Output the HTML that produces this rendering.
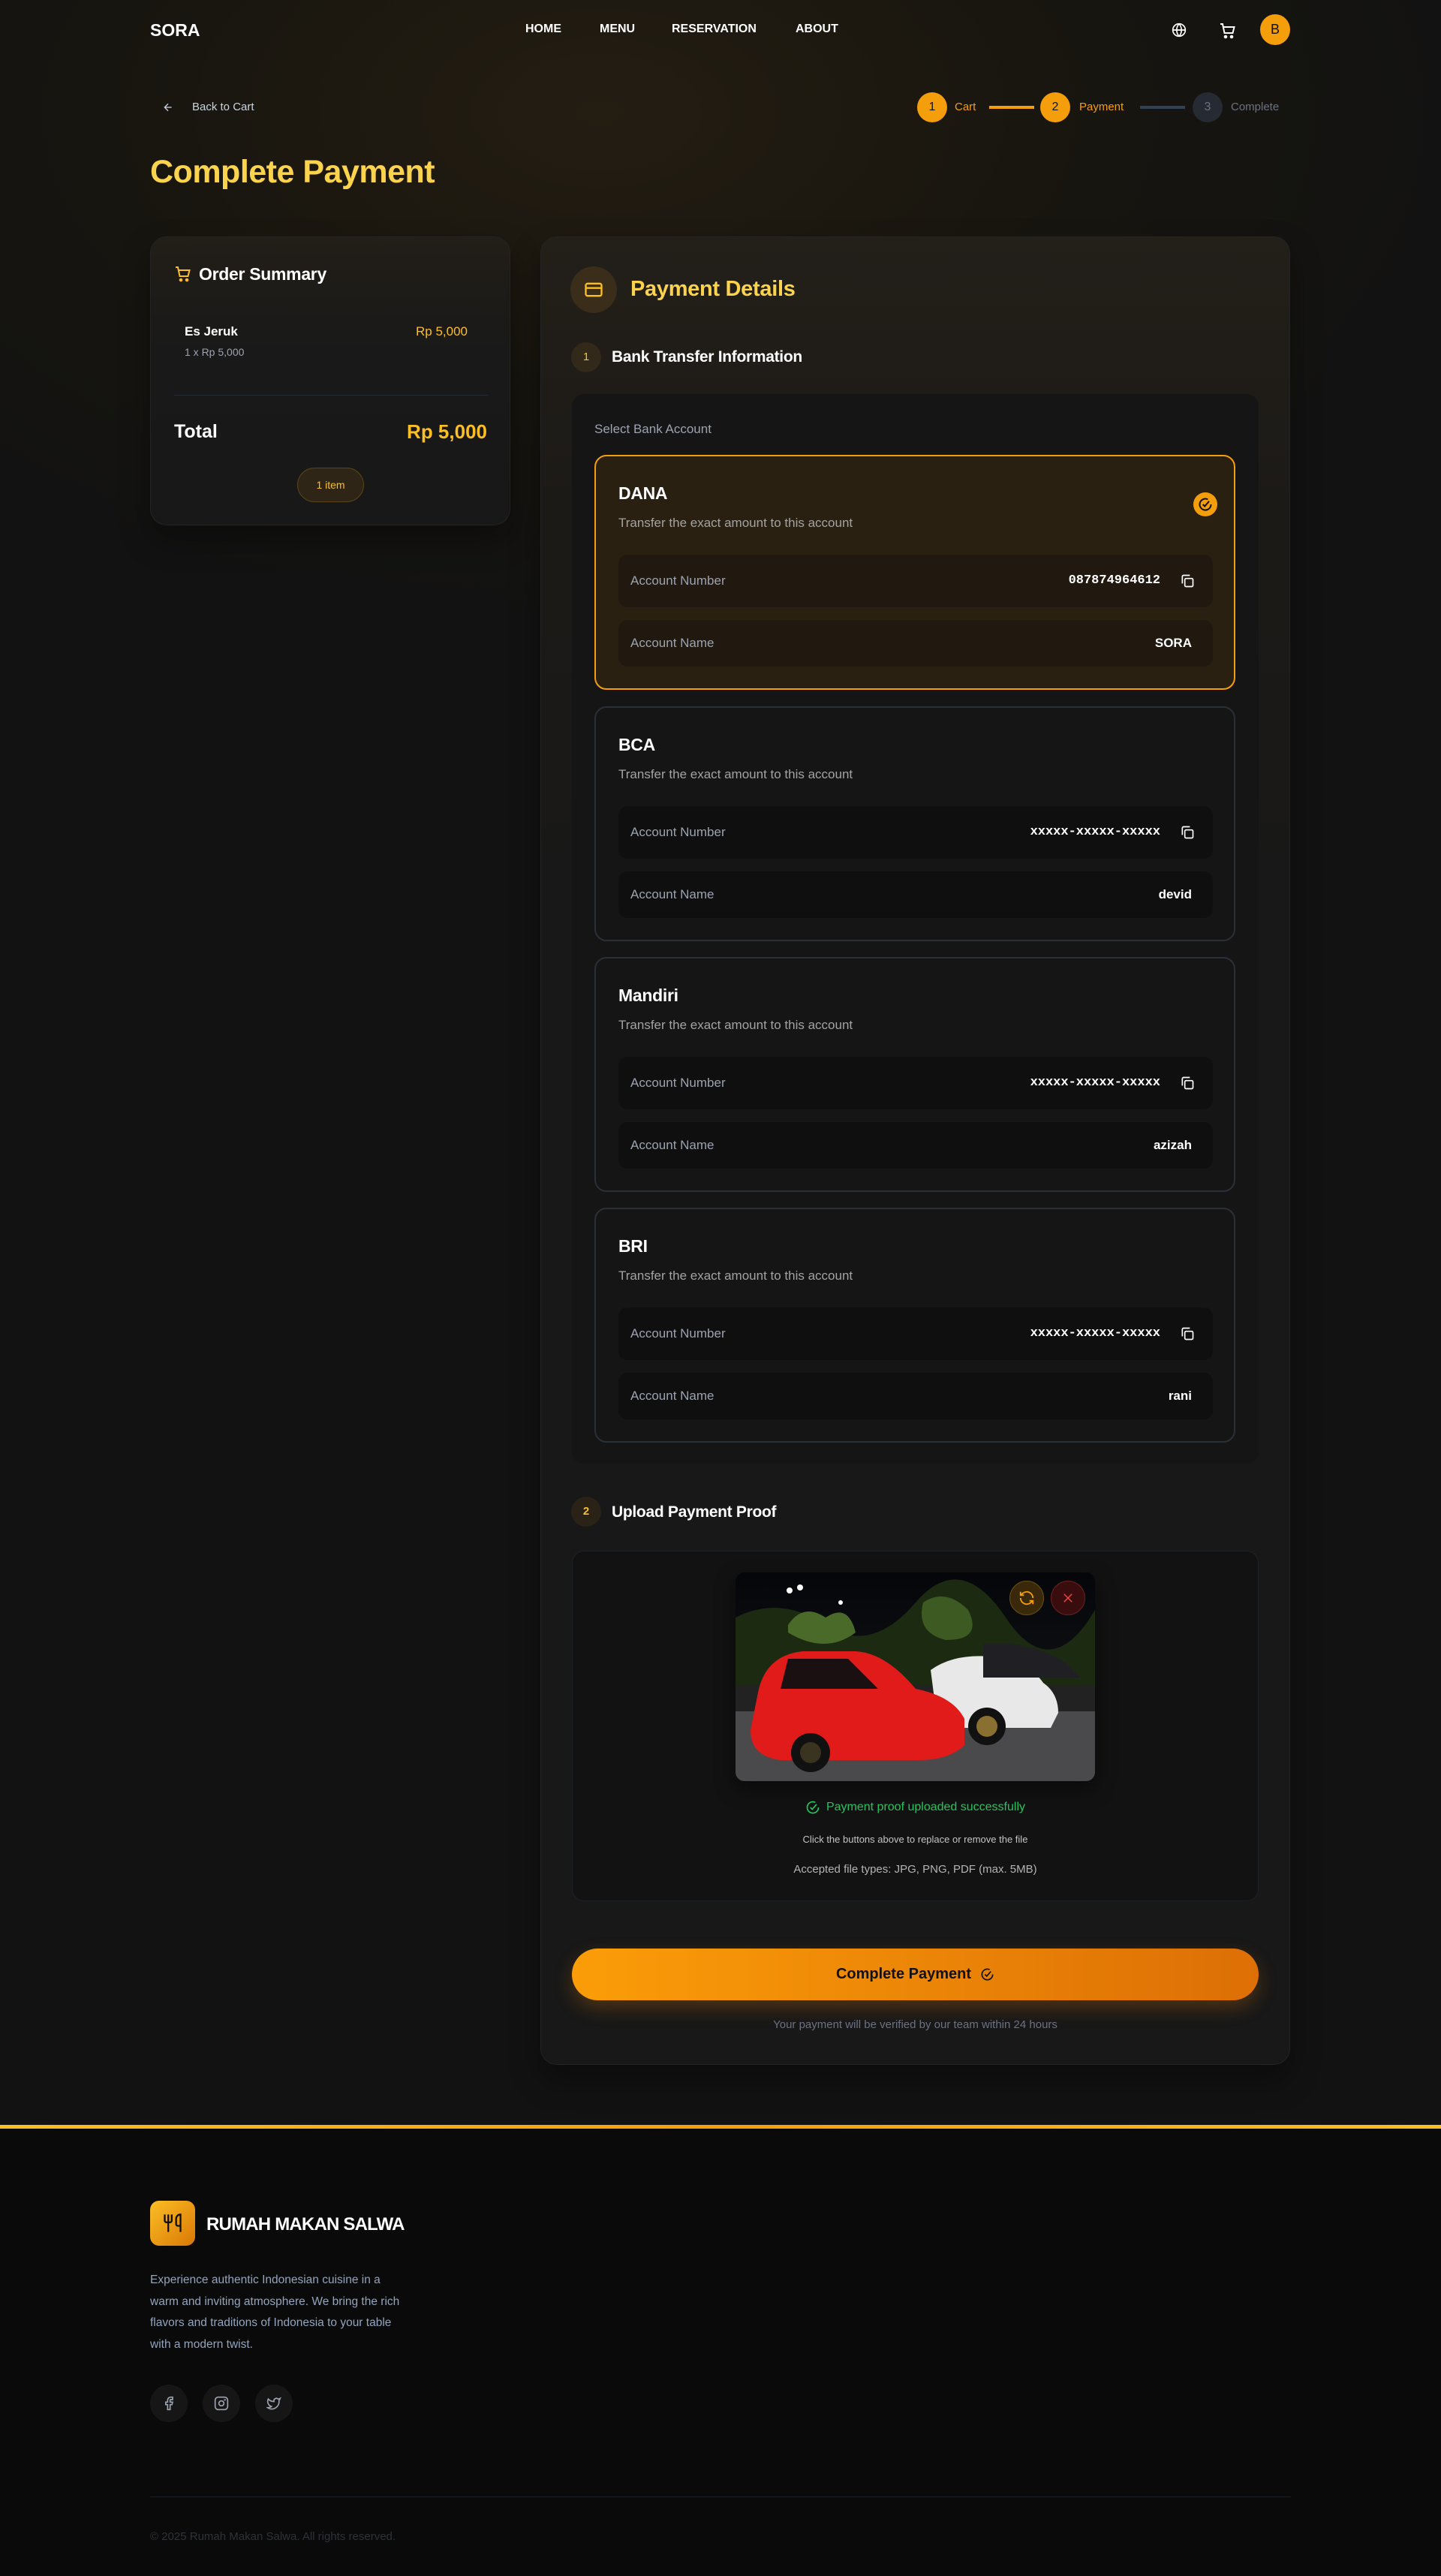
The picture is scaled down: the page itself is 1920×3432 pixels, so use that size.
<!DOCTYPE html>
<html><head><meta charset="utf-8">
<style>
*{box-sizing:border-box;margin:0;padding:0}
body{width:1920px;height:3432px;background:#121212;font-family:"Liberation Sans",sans-serif;color:#fff;position:relative;overflow:hidden}
.bgtop{position:absolute;left:0;top:0;width:1920px;height:2830px;background:radial-gradient(ellipse 1200px 700px at 800px 150px,#241d12 0%,#17150f 55%,#121212 100%)}
.a{position:absolute}
.nav a{position:absolute;top:30px;font-size:16px;font-weight:bold;color:#fff;text-decoration:none}
.card{position:absolute;border-radius:22px;border:1px solid #242424;background:linear-gradient(180deg,#221e18 0%,#191919 40%,#181818 100%);box-shadow:0 20px 40px rgba(0,0,0,.35)}
.bank{position:absolute;left:792px;width:854px;height:313px;border-radius:16px;border:2px solid #2a2f38;background:#151515}
.bank.sel{border-color:#f59e0b;background:#2a2012}
.bank h3{position:absolute;left:30px;top:36px;font-size:23px;font-weight:bold;color:#fff;letter-spacing:-0.3px}
.bank p{position:absolute;left:30px;top:79px;font-size:17px;color:#a3a3a3}
.row{position:absolute;left:30px;width:792px;border-radius:12px;background:#0f0f0f}
.sel .row{background:#21190f}
.row .l{position:absolute;left:16px;font-size:17px;color:#9ca3af}
.row .r{position:absolute;right:28px;font-size:17px;font-weight:bold;color:#fff}
.row1{top:131px;height:70px}.row1 .l,.row1 .r{top:25px}
.row1 .r{right:70px;font-family:"Liberation Mono",monospace;font-size:17px}
.row2{top:218px;height:62px}.row2 .l,.row2 .r{top:21px}
.cp{position:absolute;right:24px;top:25px}
.stepc{position:absolute;width:40px;height:40px;border-radius:50%;text-align:center;line-height:40px;font-size:16px}
</style></head><body>
<div class="bgtop"></div>
<div class="a" style="left:200px;top:27px;font-size:23px;font-weight:bold">SORA</div>
<div class="nav">
<a style="left:700px">HOME</a><a style="left:799px">MENU</a><a style="left:895px">RESERVATION</a><a style="left:1060px">ABOUT</a>
</div>
<svg class="a" style="left:1561px;top:30px" width="20" height="20" viewBox="0 0 24 24" fill="none" stroke="#fff" stroke-width="2"><circle cx="12" cy="12" r="10"/><path d="M2 12h20M12 2a15 15 0 0 1 0 20M12 2a15 15 0 0 0 0 20"/></svg>
<svg class="a" style="left:1624px;top:29px" width="24" height="24" viewBox="0 0 24 24" fill="none" stroke="#fff" stroke-width="2"><path d="M2 3h3l2.5 12h11l2-8H6"/><circle cx="9" cy="20" r="1.3" fill="#fff"/><circle cx="17" cy="20" r="1.3" fill="#fff"/></svg>
<div class="a" style="left:1679px;top:19px;width:40px;height:41px;border-radius:50%;background:#f59e0b;color:#111;text-align:center;line-height:41px;font-size:18px">B</div>
<svg class="a" style="left:216px;top:135px" width="16" height="16" viewBox="0 0 24 24" fill="none" stroke="#cbd5e1" stroke-width="2"><path d="M19 12H5M12 19l-7-7 7-7"/></svg>
<div class="a" style="left:256px;top:134px;font-size:15px;color:#cbd5e1">Back to Cart</div>
<div class="stepc" style="left:1222px;top:123px;background:#f59e0b;color:#111">1</div>
<div class="a" style="left:1272px;top:134px;font-size:15px;color:#f59e0b">Cart</div>
<div class="a" style="left:1318px;top:141px;width:60px;height:4px;background:#f59e0b"></div>
<div class="stepc" style="left:1386px;top:123px;background:#f59e0b;color:#111">2</div>
<div class="a" style="left:1438px;top:134px;font-size:15px;color:#f59e0b">Payment</div>
<div class="a" style="left:1519px;top:141px;width:60px;height:4px;background:#334155"></div>
<div class="stepc" style="left:1589px;top:123px;background:#262a33;color:#6b7280">3</div>
<div class="a" style="left:1640px;top:134px;font-size:15px;color:#6b7280">Complete</div>
<div class="a" style="left:200px;top:205px;font-size:43px;font-weight:bold;color:#fcd34d;letter-spacing:-0.5px">Complete Payment</div>

<div class="card" style="left:200px;top:315px;width:480px;height:385px">
<svg class="a" style="left:31px;top:37px" width="24" height="24" viewBox="0 0 24 24" fill="none" stroke="#fbbf24" stroke-width="2"><path d="M2 3h3l2.5 12h11l2-8H6"/><circle cx="9" cy="20" r="1.3" fill="#fbbf24"/><circle cx="17" cy="20" r="1.3" fill="#fbbf24"/></svg>
<div class="a" style="left:64px;top:36px;font-size:23px;font-weight:bold;letter-spacing:-0.3px">Order Summary</div>
<div class="a" style="left:45px;top:116px;font-size:17px;font-weight:bold">Es Jeruk</div>
<div class="a" style="left:45px;top:145px;font-size:14px;color:#9ca3af">1 x Rp 5,000</div>
<div class="a" style="right:56px;top:116px;font-size:17px;color:#fbbf24">Rp 5,000</div>
<div class="a" style="left:31px;top:210px;width:418px;height:1px;background:#262a33"></div>
<div class="a" style="left:31px;top:245px;font-size:25px;font-weight:bold">Total</div>
<div class="a" style="right:30px;top:244px;font-size:26px;font-weight:bold;color:#fbbf24">Rp 5,000</div>
<div class="a" style="left:195px;top:307px;width:89px;height:46px;border-radius:23px;background:#2e2516;border:1px solid #5a4418;color:#fbbf24;font-size:14px;text-align:center;line-height:44px">1 item</div>
</div>

<div class="card" style="left:720px;top:315px;width:999px;height:2436px;background:linear-gradient(180deg,#231f19 0%,#1c1a17 15%,#181818 40%,#181818 100%)"></div>
<div class="a" style="left:760px;top:355px;width:62px;height:62px;border-radius:50%;background:#3a2e1a"></div>
<svg class="a" style="left:777px;top:372px" width="28" height="28" viewBox="0 0 24 24" fill="none" stroke="#fbbf24" stroke-width="2"><rect x="3" y="5" width="18" height="14" rx="2"/><path d="M3 10h18"/></svg>
<div class="a" style="left:840px;top:369px;font-size:29px;font-weight:bold;color:#fcd34d;letter-spacing:-0.3px">Payment Details</div>
<div class="a" style="left:761px;top:456px;width:40px;height:40px;border-radius:50%;background:#33291a;color:#fbbf24;text-align:center;line-height:40px;font-size:15px">1</div>
<div class="a" style="left:815px;top:464px;font-size:21px;font-weight:bold;letter-spacing:-0.3px">Bank Transfer Information</div>
<div class="a" style="left:762px;top:525px;width:915px;height:1425px;border-radius:16px;background:#151515"></div>
<div class="a" style="left:792px;top:562px;font-size:17px;color:#9ca3af">Select Bank Account</div>

<div class="bank sel" style="top:606px"><h3>DANA</h3><p>Transfer the exact amount to this account</p>
<div class="a" style="right:22px;top:48px;width:32px;height:32px;border-radius:50%;background:#f59e0b"><svg style="position:absolute;left:6px;top:6px" width="20" height="20" viewBox="0 0 24 24" fill="none" stroke="#111" stroke-width="2.4"><path d="M21 12a9 9 0 1 1-5-8"/><path d="M8 12l3 3 7-8"/></svg></div>
<div class="row row1"><span class="l">Account Number</span><span class="r">087874964612</span><svg class="cp" width="20" height="20" viewBox="0 0 24 24" fill="none" stroke="#fff" stroke-width="2"><rect x="8" y="8" width="13" height="13" rx="2"/><path d="M4 16V5a2 2 0 0 1 2-2h10"/></svg></div>
<div class="row row2"><span class="l">Account Name</span><span class="r">SORA</span></div></div>

<div class="bank" style="top:941px"><h3>BCA</h3><p>Transfer the exact amount to this account</p>
<div class="row row1"><span class="l">Account Number</span><span class="r">xxxxx-xxxxx-xxxxx</span><svg class="cp" width="20" height="20" viewBox="0 0 24 24" fill="none" stroke="#fff" stroke-width="2"><rect x="8" y="8" width="13" height="13" rx="2"/><path d="M4 16V5a2 2 0 0 1 2-2h10"/></svg></div>
<div class="row row2"><span class="l">Account Name</span><span class="r">devid</span></div></div>

<div class="bank" style="top:1275px"><h3>Mandiri</h3><p>Transfer the exact amount to this account</p>
<div class="row row1"><span class="l">Account Number</span><span class="r">xxxxx-xxxxx-xxxxx</span><svg class="cp" width="20" height="20" viewBox="0 0 24 24" fill="none" stroke="#fff" stroke-width="2"><rect x="8" y="8" width="13" height="13" rx="2"/><path d="M4 16V5a2 2 0 0 1 2-2h10"/></svg></div>
<div class="row row2"><span class="l">Account Name</span><span class="r">azizah</span></div></div>

<div class="bank" style="top:1609px"><h3>BRI</h3><p>Transfer the exact amount to this account</p>
<div class="row row1"><span class="l">Account Number</span><span class="r">xxxxx-xxxxx-xxxxx</span><svg class="cp" width="20" height="20" viewBox="0 0 24 24" fill="none" stroke="#fff" stroke-width="2"><rect x="8" y="8" width="13" height="13" rx="2"/><path d="M4 16V5a2 2 0 0 1 2-2h10"/></svg></div>
<div class="row row2"><span class="l">Account Name</span><span class="r">rani</span></div></div>

<div class="a" style="left:761px;top:1994px;width:40px;height:40px;border-radius:50%;background:#2a2216;color:#fbbf24;text-align:center;line-height:40px;font-size:15px;font-weight:bold">2</div>
<div class="a" style="left:815px;top:2003px;font-size:21px;font-weight:bold;letter-spacing:-0.3px">Upload Payment Proof</div>
<div class="a" style="left:762px;top:2066px;width:915px;height:467px;border-radius:16px;background:#121212;border:1px solid #1d2128"></div>
<svg class="a" style="left:980px;top:2095px;border-radius:12px;box-shadow:0 10px 25px rgba(0,0,0,.5)" width="479" height="278" viewBox="0 0 479 278">
<defs><linearGradient id="sky" x1="0" y1="0" x2="0" y2="1"><stop offset="0" stop-color="#05060a"/><stop offset="1" stop-color="#15191a"/></linearGradient></defs>
<rect width="479" height="278" fill="url(#sky)"/>
<path d="M0 60 Q60 30 120 70 T240 40 T360 60 T479 50 V150 H0Z" fill="#1d2a12"/>
<path d="M70 70 q20-30 50-10 q30-20 40 20 q-40 30-90 0z" fill="#4a6a2a"/>
<path d="M250 40 q30-20 60 10 q20 40-30 40 q-40-10-30-50z" fill="#3d5a22"/>
<rect x="0" y="170" width="479" height="108" fill="#4a4a4c"/>
<path d="M0 150 H479 V185 H0Z" fill="#222"/>
<path d="M260 130 q30-22 80-18 q50 6 70 35 q20 14 20 40 l-10 20 H270 Z" fill="#e8e8e8"/>
<path d="M330 95 q60-5 110 25 l20 20 H330Z" fill="#202024"/>
<path d="M30 160 q10-50 60-55 h70 q40 2 80 50 q50 10 65 40 v35 q-20 20-60 20 H60 q-40-5-40-40z" fill="#e11a1a"/>
<path d="M70 115 h80 l40 40 H60z" fill="#1a1012"/>
<circle cx="100" cy="240" r="26" fill="#111"/><circle cx="100" cy="240" r="14" fill="#3a3320"/>
<circle cx="335" cy="205" r="25" fill="#111"/><circle cx="335" cy="205" r="14" fill="#8a7030"/>
<circle cx="72" cy="24" r="4" fill="#fff"/><circle cx="86" cy="20" r="4" fill="#fff"/><circle cx="140" cy="40" r="3" fill="#fff"/>
</svg>
<div class="a" style="left:1345px;top:2106px;width:46px;height:46px;border-radius:50%;background:rgba(70,50,10,.8);border:1px solid #6b4e12"></div>
<svg class="a" style="left:1357px;top:2118px" width="22" height="22" viewBox="0 0 24 24" fill="none" stroke="#f59e0b" stroke-width="2"><path d="M21 12a9 9 0 0 0-15.5-6.2L3 8M3 3v5h5M3 12a9 9 0 0 0 15.5 6.2L21 16M21 21v-5h-5"/></svg>
<div class="a" style="left:1400px;top:2106px;width:46px;height:46px;border-radius:50%;background:rgba(70,15,15,.8);border:1px solid #6b2020"></div>
<svg class="a" style="left:1414px;top:2120px" width="18" height="18" viewBox="0 0 24 24" fill="none" stroke="#ef4444" stroke-width="2"><path d="M5 5l14 14M19 5L5 19"/></svg>
<div class="a" style="left:762px;width:915px;top:2398px;display:flex;justify-content:center;align-items:center;gap:8px;font-size:16px;color:#22c55e"><svg width="20" height="20" viewBox="0 0 24 24" fill="none" stroke="#22c55e" stroke-width="2"><path d="M21 12a9 9 0 1 1-5-8"/><path d="M8 12l3 3 7-8"/></svg>Payment proof uploaded successfully</div>
<div class="a" style="left:762px;width:915px;top:2443px;text-align:center;font-size:13px;color:#c4c4c4">Click the buttons above to replace or remove the file</div>
<div class="a" style="left:762px;width:915px;top:2482px;text-align:center;font-size:15px;color:#b4b4b4">Accepted file types: JPG, PNG, PDF (max. 5MB)</div>
<div class="a" style="left:762px;top:2596px;width:915px;height:69px;border-radius:35px;background:linear-gradient(90deg,#fb9d08,#dd6f06);box-shadow:0 10px 25px rgba(245,130,10,.25);display:flex;justify-content:center;align-items:center;gap:12px;font-size:20px;font-weight:bold;color:#111">Complete Payment<svg width="19" height="19" viewBox="0 0 24 24" fill="none" stroke="#111" stroke-width="2.2"><path d="M21 12a9 9 0 1 1-5-8"/><path d="M8 12l3 3 7-8"/></svg></div>
<div class="a" style="left:762px;width:915px;top:2689px;text-align:center;font-size:15px;color:#6b7280">Your payment will be verified by our team within 24 hours</div>

<div class="a" style="left:0;top:2831px;width:1920px;height:601px;background:#0a0a0a"></div>
<div class="a" style="left:0;top:2831px;width:1920px;height:5px;background:linear-gradient(90deg,#fbbf24,#f59e0b,#fbbf24)"></div>
<div class="a" style="left:200px;top:2932px;width:60px;height:60px;border-radius:12px;background:linear-gradient(135deg,#fbbf24,#d97706)"></div>
<svg class="a" style="left:216px;top:2948px" width="28" height="28" viewBox="0 0 24 24" fill="none" stroke="#111" stroke-width="2"><path d="M3 2v7c0 1.1.9 2 2 2h4a2 2 0 0 0 2-2V2M7 2v20M21 15V2a5 5 0 0 0-5 5v6c0 1.1.9 2 2 2h3zm0 0v7"/></svg>
<div class="a" style="left:275px;top:2950px;font-size:24px;font-weight:bold;letter-spacing:-0.8px">RUMAH MAKAN SALWA</div>
<div class="a" style="left:200px;top:3024px;white-space:nowrap;font-size:15.5px;line-height:28.5px;color:#93a4bd">Experience authentic Indonesian cuisine in a<br>warm and inviting atmosphere. We bring the rich<br>flavors and traditions of Indonesia to your table<br>with a modern twist.</div>
<div class="a" style="left:200px;top:3177px;width:50px;height:50px;border-radius:50%;background:#161616"></div>
<div class="a" style="left:270px;top:3177px;width:50px;height:50px;border-radius:50%;background:#161616"></div>
<div class="a" style="left:340px;top:3177px;width:50px;height:50px;border-radius:50%;background:#161616"></div>
<svg class="a" style="left:215px;top:3192px" width="20" height="20" viewBox="0 0 24 24" fill="none" stroke="#9ca3af" stroke-width="2"><path d="M18 2h-3a5 5 0 0 0-5 5v3H7v4h3v8h4v-8h3l1-4h-4V7a1 1 0 0 1 1-1h3z"/></svg>
<svg class="a" style="left:285px;top:3192px" width="20" height="20" viewBox="0 0 24 24" fill="none" stroke="#9ca3af" stroke-width="2"><rect x="2" y="2" width="20" height="20" rx="5"/><circle cx="12" cy="12" r="4"/><circle cx="17.5" cy="6.5" r=".5"/></svg>
<svg class="a" style="left:355px;top:3192px" width="20" height="20" viewBox="0 0 24 24" fill="none" stroke="#9ca3af" stroke-width="2"><path d="M22 4s-.7 2.1-2 3.4c1.6 10-9.4 17.3-18 11.6 2.2.1 4.4-.6 6-2C3 15.5.5 9.6 3 5c2.2 2.6 5.6 4.1 9 4-.9-4.2 4-6.6 7-3.8 1.1 0 3-1.2 3-1.2z"/></svg>
<div class="a" style="left:200px;top:3326px;width:1520px;height:1px;background:#1c1f24"></div>
<div class="a" style="left:200px;top:3371px;font-size:15px;color:#2e3238">© 2025 Rumah Makan Salwa. All rights reserved.</div>
</body></html>
